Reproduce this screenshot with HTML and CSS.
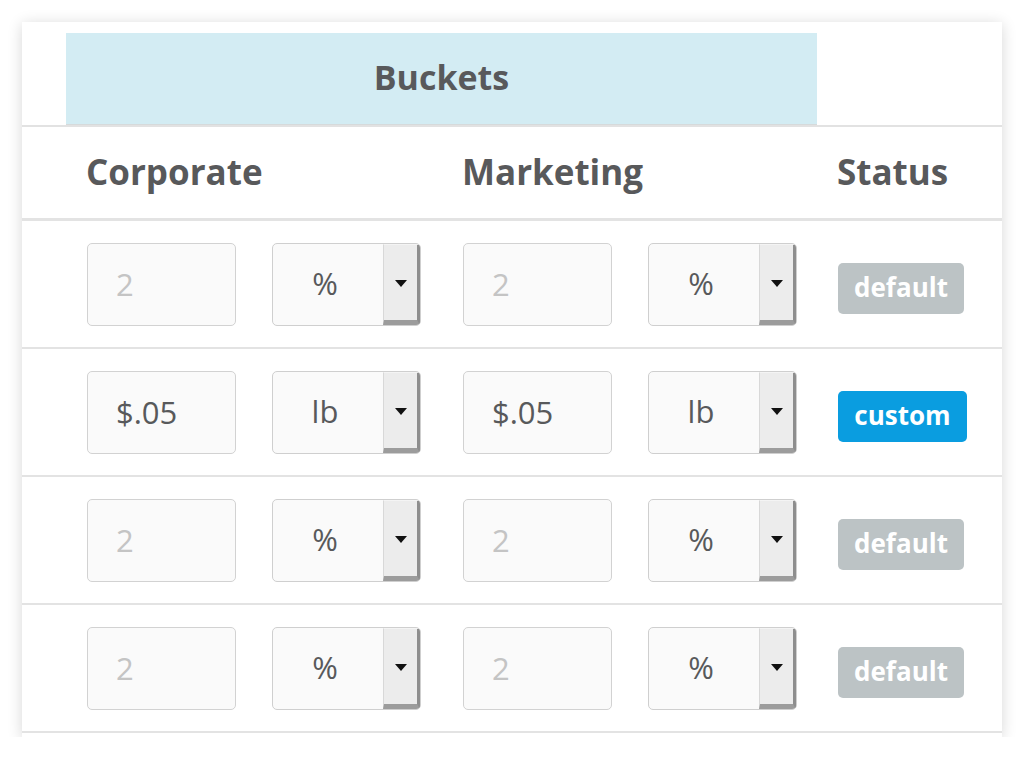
FILE: index.html
```html
<!DOCTYPE html>
<html>
<head>
<meta charset="utf-8">
<link rel="stylesheet" href="styles.css">
</head>
<body>
<div class="card">
  <div class="top">
    <div class="buckets">Buckets</div>
  </div>
  <div class="grid head">
    <div class="hcell span2">Corporate</div>
    <div class="hcell span2">Marketing</div>
    <div class="hcell">Status</div>
  </div>

  <div class="grid row">
    <div class="input placeholder">2</div>
    <div class="select"><span class="val">%</span><span class="btn"><span class="tri"></span></span></div>
    <div class="input placeholder">2</div>
    <div class="select"><span class="val">%</span><span class="btn"><span class="tri"></span></span></div>
    <div class="status"><span class="badge default">default</span></div>
  </div>

  <div class="grid row">
    <div class="input">$.05</div>
    <div class="select"><span class="val">lb</span><span class="btn"><span class="tri"></span></span></div>
    <div class="input">$.05</div>
    <div class="select"><span class="val">lb</span><span class="btn"><span class="tri"></span></span></div>
    <div class="status"><span class="badge custom">custom</span></div>
  </div>

  <div class="grid row">
    <div class="input placeholder">2</div>
    <div class="select"><span class="val">%</span><span class="btn"><span class="tri"></span></span></div>
    <div class="input placeholder">2</div>
    <div class="select"><span class="val">%</span><span class="btn"><span class="tri"></span></span></div>
    <div class="status"><span class="badge default">default</span></div>
  </div>

  <div class="grid row">
    <div class="input placeholder">2</div>
    <div class="select"><span class="val">%</span><span class="btn"><span class="tri"></span></span></div>
    <div class="input placeholder">2</div>
    <div class="select"><span class="val">%</span><span class="btn"><span class="tri"></span></span></div>
    <div class="status"><span class="badge default">default</span></div>
  </div>
</div>
</body>
</html>
```

FILE: styles.css
```css
* { box-sizing: border-box; }
body {
  margin: 0;
  background: #ffffff;
  font-family: "Open Sans", "Liberation Sans", sans-serif;
  color: #58595b;
}
.card {
  margin: 22px 0 0 22px;
  width: 980px;
  background: #ffffff;
  box-shadow: 0 2px 14px rgba(0,0,0,0.16);
  padding-bottom: 4px;
}
.top {
  height: 105px;
  padding: 11px 0 0 44px;
  border-bottom: 2px solid #e2e2e2;
}
.buckets {
  width: 751px;
  height: 92px;
  background: #d3ecf3;
  border-bottom: 1px solid #d6dadb;
  display: flex;
  align-items: center;
  justify-content: center;
  font-weight: 700;
  font-size: 34px;
  padding-bottom: 3px;
}
.grid {
  display: grid;
  grid-template-columns: 185px 191px 185px 190px 1fr;
  padding-left: 65px;
  align-items: center;
}
.head {
  height: 94px;
  border-bottom: 3px solid #e3e3e3;
  padding-bottom: 2px;
}
.hcell {
  font-weight: 700;
  font-size: 35px;
  margin-left: -1px;
}
.span2 { grid-column: span 2; }
.row {
  height: 128px;
  border-bottom: 2px solid #e3e3e3;
}
.input {
  width: 149px;
  height: 83px;
  border: 1.5px solid #d2d2d2;
  border-radius: 5px;
  background: #fafafa;
  font-size: 31px;
  padding-left: 28px;
  display: flex;
  align-items: center;
  color: #58595b;
}
.input.placeholder { color: #c4c4c4; }
.select {
  width: 149px;
  height: 83px;
  border: 1.5px solid #cfcfcf;
  border-radius: 5px;
  background: #fafafa;
  display: flex;
  overflow: hidden;
}
.val {
  flex: 1;
  display: flex;
  align-items: center;
  justify-content: center;
  font-size: 31px;
  color: #58595b;
  padding: 0 6px 2px 0;
}
.btn {
  width: 37px;
  background: #ececec;
  border-left: 1px solid #d8d8d8;
  border-top: 1px solid #f4f4f4;
  border-right: 3px solid #8e8e8e;
  border-bottom: 5px solid #9c9c9c;
  display: flex;
  align-items: center;
  justify-content: center;
  padding-top: 2px;
}
.tri {
  width: 0;
  height: 0;
  border-left: 6px solid transparent;
  border-right: 6px solid transparent;
  border-top: 7px solid #111;
}
.status { padding-top: 9px; }
.badge {
  display: inline-flex;
  align-items: center;
  justify-content: center;
  height: 51px;
  border-radius: 5px;
  color: #ffffff;
  font-weight: 700;
  font-size: 26px;
  padding: 0 0 3px;
}
.badge.default { background: #bcc3c5; width: 126px; }
.badge.custom { background: #0a9de0; width: 129px; }
```
